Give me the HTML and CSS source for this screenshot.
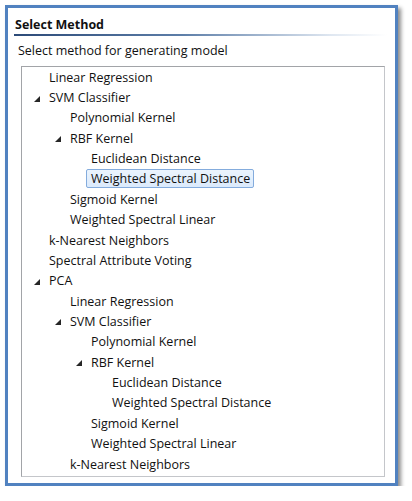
FILE: index.html
```html
<!DOCTYPE html>
<html lang="en">

<head>
    <meta charset="UTF-8">
    <title>Select Method</title>
    <link rel="stylesheet" href="styles.css">
</head>

<body>
    <div class="window">
        <div class="title">Select Method</div>
        <div class="title-line"></div>
        <div class="subtitle">Select method for generating model</div>

        <div class="tree">
            <ul class="level">
                <li><div class="row"><span class="exp"></span><span class="label">Linear Regression</span></div></li>
                <li>
                    <div class="row"><span class="exp open"></span><span class="label">SVM Classifier</span></div>
                    <ul class="level">
                        <li><div class="row"><span class="exp"></span><span class="label">Polynomial Kernel</span></div></li>
                        <li>
                            <div class="row"><span class="exp open"></span><span class="label">RBF Kernel</span></div>
                            <ul class="level">
                                <li><div class="row"><span class="exp"></span><span class="label">Euclidean Distance</span></div></li>
                                <li><div class="row"><span class="exp"></span><span class="label selected">Weighted Spectral Distance</span></div></li>
                            </ul>
                        </li>
                        <li><div class="row"><span class="exp"></span><span class="label">Sigmoid Kernel</span></div></li>
                        <li><div class="row"><span class="exp"></span><span class="label">Weighted Spectral Linear</span></div></li>
                    </ul>
                </li>
                <li><div class="row"><span class="exp"></span><span class="label">k-Nearest Neighbors</span></div></li>
                <li><div class="row"><span class="exp"></span><span class="label">Spectral Attribute Voting</span></div></li>
                <li>
                    <div class="row"><span class="exp open"></span><span class="label">PCA</span></div>
                    <ul class="level">
                        <li><div class="row"><span class="exp"></span><span class="label">Linear Regression</span></div></li>
                        <li>
                            <div class="row"><span class="exp open"></span><span class="label">SVM Classifier</span></div>
                            <ul class="level">
                                <li><div class="row"><span class="exp"></span><span class="label">Polynomial Kernel</span></div></li>
                                <li>
                                    <div class="row"><span class="exp open"></span><span class="label">RBF Kernel</span></div>
                                    <ul class="level">
                                        <li><div class="row"><span class="exp"></span><span class="label">Euclidean Distance</span></div></li>
                                        <li><div class="row"><span class="exp"></span><span class="label">Weighted Spectral Distance</span></div></li>
                                    </ul>
                                </li>
                                <li><div class="row"><span class="exp"></span><span class="label">Sigmoid Kernel</span></div></li>
                                <li><div class="row"><span class="exp"></span><span class="label">Weighted Spectral Linear</span></div></li>
                            </ul>
                        </li>
                        <li><div class="row"><span class="exp"></span><span class="label">k-Nearest Neighbors</span></div></li>
                    </ul>
                </li>
            </ul>
        </div>
    </div>
</body>

</html>
```

FILE: styles.css
```css
body {
    margin: 0;
    background-color: #ffffff;
    font-family: "Open Sans", "Noto Sans", sans-serif;
    font-size: 12.5px;
    color: #111111;
}

.window {
    margin: 5px 0 0 5px;
    width: 387px;
    height: 475px;
    border: 3px solid #5182c0;
    box-shadow: 3px 3px 4px rgba(0, 0, 0, 0.45);
    background-color: #ffffff;
    display: flex;
    flex-direction: column;
}

.title {
    font-weight: bold;
    font-size: 12.5px;
    padding: 7px 0 0 7px;
    height: 19px;
    line-height: 19px;
}

.title-line {
    margin: 0 8px 0 6px;
    height: 2px;
    background: linear-gradient(to right, #2c4a78 0%, #5d7ea8 45%, #dfe7f1 85%, #ffffff 100%);
}

.subtitle {
    padding: 5px 0 0 10px;
    height: 19px;
    line-height: 19px;
}

.tree {
    margin: 6px 0 0 13px;
    width: 362px;
    height: 409px;
    border: 1px solid #a2a4a8;
    border-right-color: #c4c6ca;
    border-bottom-color: #c4c6ca;
}

.level {
    list-style: none;
    margin: 0;
    padding: 0 0 0 21px;
}

.tree > .level {
    padding-left: 4px;
}

.row {
    height: 20.37px;
    display: flex;
    align-items: center;
}

.exp {
    width: 16px;
    height: 16px;
    flex: none;
    position: relative;
}

/* expanded arrow, windows 7 style */
.exp.open::after {
    content: "";
    position: absolute;
    right: 2px;
    top: 6px;
    width: 0;
    height: 0;
    border-left: 6px solid transparent;
    border-bottom: 6px solid #262626;
}

.label {
    margin-left: 2px;
    padding: 0 3px 0 4px;
    height: 17px;
    line-height: 17px;
    border: 1px solid transparent;
    border-radius: 2px;
    white-space: nowrap;
}

.label.selected {
    background: linear-gradient(#ebf4fd, #dbeafc);
    border-color: #84acdd;
}
```
